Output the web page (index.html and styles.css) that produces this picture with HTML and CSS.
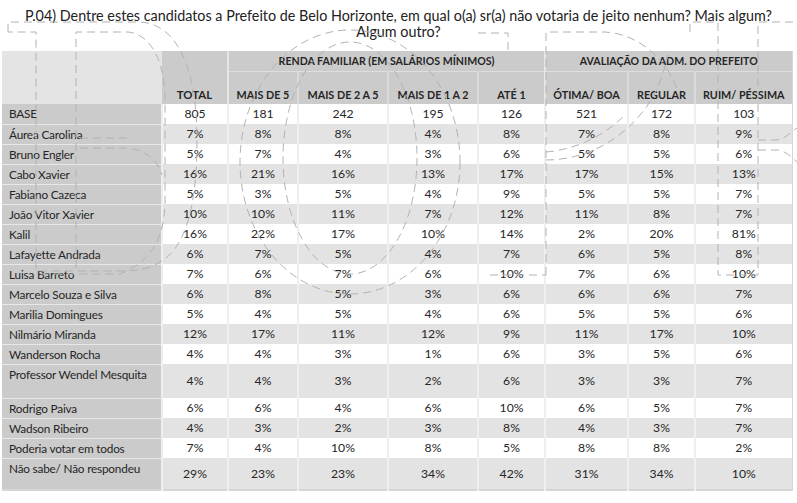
FILE: index.html
```html
<!DOCTYPE html>
<html lang="pt-BR">
<head>
<meta charset="utf-8">
<title>P.04</title>
<link rel="stylesheet" href="styles.css">
</head>
<body>
<div class="page">
  <h1 class="title">P.04) Dentre estes candidatos a Prefeito de Belo Horizonte, em qual o(a) sr(a) não votaria de jeito nenhum? Mais algum?<br>Algum outro?</h1>
  <table class="grid">
    <colgroup>
      <col class="c-label"><col class="c-total"><col class="c-r1"><col class="c-r2"><col class="c-r3"><col class="c-r4"><col class="c-a1"><col class="c-a2"><col class="c-a3">
    </colgroup>
    <thead>
      <tr class="h1">
        <th class="corner" rowspan="2"></th>
        <th class="total" rowspan="2">TOTAL</th>
        <th class="group" colspan="4">RENDA FAMILIAR (EM SALÁRIOS MÍNIMOS)</th>
        <th class="group" colspan="3">AVALIAÇÃO DA ADM. DO PREFEITO</th>
      </tr>
      <tr class="h2">
        <th class="sub first">MAIS DE 5</th>
        <th class="sub">MAIS DE 2 A 5</th>
        <th class="sub">MAIS DE 1 A 2</th>
        <th class="sub">ATÉ 1</th>
        <th class="sub first">ÓTIMA/ BOA</th>
        <th class="sub">REGULAR</th>
        <th class="sub">RUIM/ PÉSSIMA</th>
      </tr>
    </thead>
    <tbody>
      <tr class="w"><td class="lbl">BASE</td><td>805</td><td>181</td><td>242</td><td>195</td><td>126</td><td>521</td><td>172</td><td>103</td></tr>
      <tr class="g"><td class="lbl">Áurea Carolina</td><td>7%</td><td>8%</td><td>8%</td><td>4%</td><td>8%</td><td>7%</td><td>8%</td><td>9%</td></tr>
      <tr class="w"><td class="lbl">Bruno Engler</td><td>5%</td><td>7%</td><td>4%</td><td>3%</td><td>6%</td><td>5%</td><td>5%</td><td>6%</td></tr>
      <tr class="g"><td class="lbl">Cabo Xavier</td><td>16%</td><td>21%</td><td>16%</td><td>13%</td><td>17%</td><td>17%</td><td>15%</td><td>13%</td></tr>
      <tr class="w"><td class="lbl">Fabiano Cazeca</td><td>5%</td><td>3%</td><td>5%</td><td>4%</td><td>9%</td><td>5%</td><td>5%</td><td>7%</td></tr>
      <tr class="g"><td class="lbl">João Vitor Xavier</td><td>10%</td><td>10%</td><td>11%</td><td>7%</td><td>12%</td><td>11%</td><td>8%</td><td>7%</td></tr>
      <tr class="w"><td class="lbl">Kalil</td><td>16%</td><td>22%</td><td>17%</td><td>10%</td><td>14%</td><td>2%</td><td>20%</td><td>81%</td></tr>
      <tr class="g"><td class="lbl">Lafayette Andrada</td><td>6%</td><td>7%</td><td>5%</td><td>4%</td><td>7%</td><td>6%</td><td>5%</td><td>8%</td></tr>
      <tr class="w"><td class="lbl">Luisa Barreto</td><td>7%</td><td>6%</td><td>7%</td><td>6%</td><td>10%</td><td>7%</td><td>6%</td><td>10%</td></tr>
      <tr class="g"><td class="lbl">Marcelo Souza e Silva</td><td>6%</td><td>8%</td><td>5%</td><td>3%</td><td>6%</td><td>6%</td><td>6%</td><td>7%</td></tr>
      <tr class="w"><td class="lbl">Marilia Domingues</td><td>5%</td><td>4%</td><td>5%</td><td>4%</td><td>6%</td><td>5%</td><td>5%</td><td>6%</td></tr>
      <tr class="g"><td class="lbl">Nilmário Miranda</td><td>12%</td><td>17%</td><td>11%</td><td>12%</td><td>9%</td><td>11%</td><td>17%</td><td>10%</td></tr>
      <tr class="w"><td class="lbl">Wanderson Rocha</td><td>4%</td><td>4%</td><td>3%</td><td>1%</td><td>6%</td><td>3%</td><td>5%</td><td>6%</td></tr>
      <tr class="g tall"><td class="lbl">Professor Wendel Mesquita</td><td>4%</td><td>4%</td><td>3%</td><td>2%</td><td>6%</td><td>3%</td><td>3%</td><td>7%</td></tr>
      <tr class="w"><td class="lbl">Rodrigo Paiva</td><td>6%</td><td>6%</td><td>4%</td><td>6%</td><td>10%</td><td>6%</td><td>5%</td><td>7%</td></tr>
      <tr class="g"><td class="lbl">Wadson Ribeiro</td><td>4%</td><td>3%</td><td>2%</td><td>3%</td><td>8%</td><td>4%</td><td>3%</td><td>7%</td></tr>
      <tr class="w"><td class="lbl">Poderia votar em todos</td><td>7%</td><td>4%</td><td>10%</td><td>8%</td><td>5%</td><td>8%</td><td>8%</td><td>2%</td></tr>
      <tr class="g tall2"><td class="lbl">Não sabe/ Não respondeu</td><td>29%</td><td>23%</td><td>23%</td><td>34%</td><td>42%</td><td>31%</td><td>34%</td><td>10%</td></tr>
    </tbody>
  </table>
  <svg class="watermark" width="797" height="503" viewBox="0 0 797 503" aria-hidden="true">
    <g fill="none" stroke="#b2b2b2" stroke-width="1" stroke-dasharray="8 5">
      <path d="M8 32 V22 H140 C178 24 197 70 197 140 C197 215 182 250 160 262 C150 268 140 271 120 271 H36 V32 H8"/>
      <path d="M76 268 V32 H128 C150 34 165 60 165 100 V200 C165 240 150 262 120 274 H40"/>
      <path d="M80 138 H130 M80 148 H128 C145 150 158 160 162 175"/>
      <ellipse cx="350" cy="162" rx="110" ry="132"/>
      <ellipse cx="350" cy="158" rx="67" ry="116"/>
      <path d="M478 33 H508 V52"/>
      <path d="M546 275 V32 H605 C640 34 672 62 680 100"/>
      <path d="M546 160 C580 160 615 145 640 115 C655 98 662 80 668 55"/>
      <path d="M546 152 C570 150 600 140 625 115"/>
      <path d="M690 32 V22 H718 V275 H758 V22 H797"/>
      <path d="M758 140 H775 C785 140 790 132 797 128 M758 150 H778 C788 152 792 158 797 162"/>
      <path d="M490 275 H546"/>
    </g>
  </svg>
</div>
</body>
</html>
```

FILE: styles.css
```css
* { box-sizing: border-box; }

html, body {
  margin: 0;
  padding: 0;
  background: #ffffff;
}

body {
  font-family: Lato, "Liberation Sans", sans-serif;
  color: #262626;
}

.page {
  position: relative;
  width: 797px;
  height: 503px;
  overflow: hidden;
}

.title {
  margin: 0;
  padding: 8px 6px 0 6px;
  height: 51px;
  font-size: 14.35px;
  font-weight: 400;
  line-height: 16px;
  text-align: center;
  color: #222222;
}

.grid {
  margin-left: 2px;
  width: 790px;
  table-layout: fixed;
  border-collapse: collapse;
  border-bottom: 2px solid #d6d6d6;
  border-right: 1px solid #d6d6d6;
  font-size: 12.2px;
}

.c-label { width: 160px; }
.c-total { width: 66px; }
.c-r1 { width: 70px; }
.c-r2 { width: 90px; }
.c-r3 { width: 90px; }
.c-r4 { width: 67px; }
.c-a1 { width: 83px; }
.c-a2 { width: 67px; }
.c-a3 { width: 97px; }

th {
  font-weight: 700;
  font-size: 10.6px;
  color: #262626;
  padding: 0;
  background: #cbcbcb;
}

.h1 { height: 20px; }
.h2 { height: 33px; }

.corner {
  background: #e4e4e4;
}

.total {
  vertical-align: bottom;
  padding-bottom: 3px;
  font-size: 11.4px;
}

.group {
  border-left: 2px solid #e6e6e6;
  border-bottom: 1px solid #dedede;
  vertical-align: middle;
}

.sub {
  vertical-align: bottom;
  padding-bottom: 3px;
  border-left: 2px solid #dadada;
  font-size: 10.8px;
}

.sub.first {
  border-left: 2px solid #e6e6e6;
}

tbody tr { height: 20px; }
tbody tr.tall { height: 34px; }
tbody tr.tall2 { height: 32px; }

td {
  padding: 0;
  text-align: center;
  vertical-align: middle;
  line-height: 16px;
  border-left: 2px solid #efefef;
  white-space: nowrap;
}

tr.w td { background: #ffffff; }
tr.g td { background: #e3e3e3; }

td.lbl {
  background: #cbcbcb !important;
  text-align: left;
  vertical-align: top;
  padding: 2px 0 0 7px;
  border-left: none;
  border-bottom: 1px solid #e8e8e8;
  font-size: 11.8px;
  letter-spacing: -0.2px;
}

.watermark {
  position: absolute;
  left: 0;
  top: 0;
  pointer-events: none;
}
```
